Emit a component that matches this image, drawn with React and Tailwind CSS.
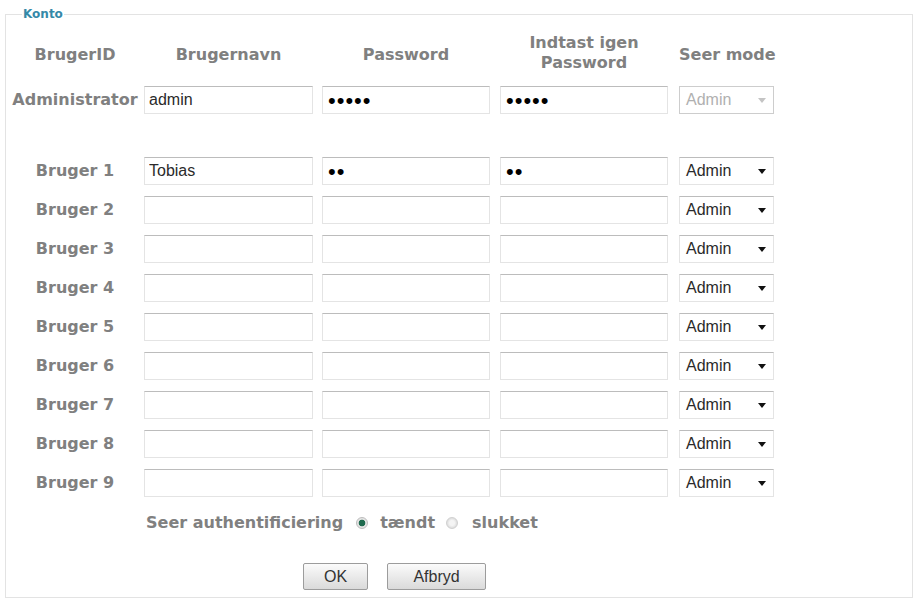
import React, { useState } from "react";

const users = [
  { id: "Bruger 1", name: "Tobias", pass: "to" },
  { id: "Bruger 2", name: "", pass: "" },
  { id: "Bruger 3", name: "", pass: "" },
  { id: "Bruger 4", name: "", pass: "" },
  { id: "Bruger 5", name: "", pass: "" },
  { id: "Bruger 6", name: "", pass: "" },
  { id: "Bruger 7", name: "", pass: "" },
  { id: "Bruger 8", name: "", pass: "" },
  { id: "Bruger 9", name: "", pass: "" },
];

const labelFont = { fontFamily: '"DejaVu Sans", Verdana, sans-serif' };
const fieldFont = { fontFamily: '"Liberation Sans", Arial, sans-serif' };

const TextBox = ({ value, onChange }) => (
  <input
    type="text"
    value={value}
    onChange={onChange}
    style={fieldFont}
    className="h-[28px] w-[169px] shrink-0 border border-[#e4e4e4] border-t-[#bcbcbc] bg-white pl-[4px] text-[16px] text-[#2a2a2a] outline-none"
  />
);

const PassBox = ({ value, onChange, className = "" }) => (
  <input
    type="password"
    value={value}
    onChange={onChange}
    style={fieldFont}
    className={
      "h-[28px] w-[168px] shrink-0 border border-[#e4e4e4] border-t-[#bcbcbc] bg-white pl-[5px] text-[22px] tracking-[1px] text-black outline-none " +
      className
    }
  />
);

const ModeSelect = ({ disabled }) => (
  <div
    style={fieldFont}
    className={
      "ml-[11px] flex h-[28px] w-[95px] shrink-0 items-center justify-between border bg-white pl-[6px] pr-[7px] text-[16px] " +
      (disabled ? "border-[#cdcdcd] text-[#b0b0b0]" : "border-[#e4e4e4] border-t-[#bcbcbc] text-[#2a2a2a]")
    }
  >
    <span>Admin</span>
    <svg width="8" height="5" viewBox="0 0 8 5">
      <path d="M0 0h8L4 5z" fill={disabled ? "#c4c4c4" : "#111"} />
    </svg>
  </div>
);

const RowLabel = ({ children }) => (
  <div
    style={labelFont}
    className="flex h-[28px] w-[138px] shrink-0 items-center justify-center whitespace-nowrap text-[16px] font-bold text-[#808080]"
  >
    {children}
  </div>
);

export default function App() {
  const [admin, setAdmin] = useState({ name: "admin", pass: "admin", pass2: "admin" });
  const [rows, setRows] = useState(users.map((u) => ({ ...u, pass2: u.pass })));
  const [auth, setAuth] = useState("on");

  const updateRow = (i, key, value) => {
    setRows((prev) => prev.map((r, idx) => (idx === i ? { ...r, [key]: value } : r)));
  };

  return (
    <div className="h-[601px] w-[915px] bg-white pt-[7px]">
      <fieldset className="ml-[5px] h-[591px] w-[908px] border border-[#e3e3e3] pb-[7px]">
        <legend
          style={labelFont}
          className="ml-[16px] px-[1px] text-[12px] font-bold leading-[14px] text-[#3589a8]"
        >
          Konto
        </legend>

        {/* header */}
        <div
          style={labelFont}
          className="mt-[12px] flex h-[40px] items-center whitespace-nowrap text-[16px] font-bold text-[#808080]"
        >
          <div className="mt-[4px] w-[138px] shrink-0 text-center">BrugerID</div>
          <div className="mt-[4px] w-[169px] shrink-0 text-center">Brugernavn</div>
          <div className="ml-[9px] mt-[4px] w-[168px] shrink-0 text-center">Password</div>
          <div className="ml-[10px] flex w-[168px] shrink-0 flex-col items-center leading-[20px]">
            <span>Indtast igen</span>
            <span>Password</span>
          </div>
          <div className="ml-[11px] mt-[4px] w-[95px] shrink-0 text-center">Seer mode</div>
        </div>

        {/* administrator */}
        <div className="mt-[13px] flex">
          <RowLabel>Administrator</RowLabel>
          <TextBox value={admin.name} onChange={(e) => setAdmin({ ...admin, name: e.target.value })} />
          <PassBox
            className="ml-[9px]"
            value={admin.pass}
            onChange={(e) => setAdmin({ ...admin, pass: e.target.value })}
          />
          <PassBox
            className="ml-[10px]"
            value={admin.pass2}
            onChange={(e) => setAdmin({ ...admin, pass2: e.target.value })}
          />
          <ModeSelect disabled />
        </div>

        {/* users */}
        <div className="mt-[43px] flex flex-col gap-y-[11px]">
          {rows.map((r, i) => (
            <div key={r.id} className="flex">
              <RowLabel>{r.id}</RowLabel>
              <TextBox value={r.name} onChange={(e) => updateRow(i, "name", e.target.value)} />
              <PassBox className="ml-[9px]" value={r.pass} onChange={(e) => updateRow(i, "pass", e.target.value)} />
              <PassBox className="ml-[10px]" value={r.pass2} onChange={(e) => updateRow(i, "pass2", e.target.value)} />
              <ModeSelect />
            </div>
          ))}
        </div>

        {/* viewer authentication */}
        <div
          style={labelFont}
          className="ml-[140px] mt-[16px] flex h-[20px] items-center text-[16px] font-bold text-[#808080]"
        >
          <span>Seer authentificiering</span>
          <input
            type="radio"
            name="auth"
            checked={auth === "on"}
            onChange={() => setAuth("on")}
            className="ml-[13px] h-[12px] w-[12px] appearance-none rounded-full border border-[#bdbdbd] bg-[radial-gradient(circle,#1f6b4f_42%,#e4e4e4_52%)]"
          />
          <span className="ml-[12px]">tændt</span>
          <input
            type="radio"
            name="auth"
            checked={auth === "off"}
            onChange={() => setAuth("off")}
            className="ml-[11px] h-[12px] w-[12px] appearance-none rounded-full border border-[#d0d0d0] bg-[radial-gradient(circle,#f4f4f4_35%,#dedede_70%)]"
          />
          <span className="ml-[14px]">slukket</span>
        </div>

        {/* buttons */}
        <div className="ml-[297px] mt-[30px] flex gap-x-[19px]" style={fieldFont}>
          <button
            type="button"
            className="h-[27px] w-[65px] rounded-[2px] border border-[#9c9c9c] bg-gradient-to-b from-[#fbfbfb] to-[#dadada] text-[16px] text-[#333]"
          >
            OK
          </button>
          <button
            type="button"
            className="h-[27px] w-[99px] rounded-[2px] border border-[#9c9c9c] bg-gradient-to-b from-[#fbfbfb] to-[#dadada] text-[16px] text-[#333]"
          >
            Afbryd
          </button>
        </div>
      </fieldset>
    </div>
  );
}
